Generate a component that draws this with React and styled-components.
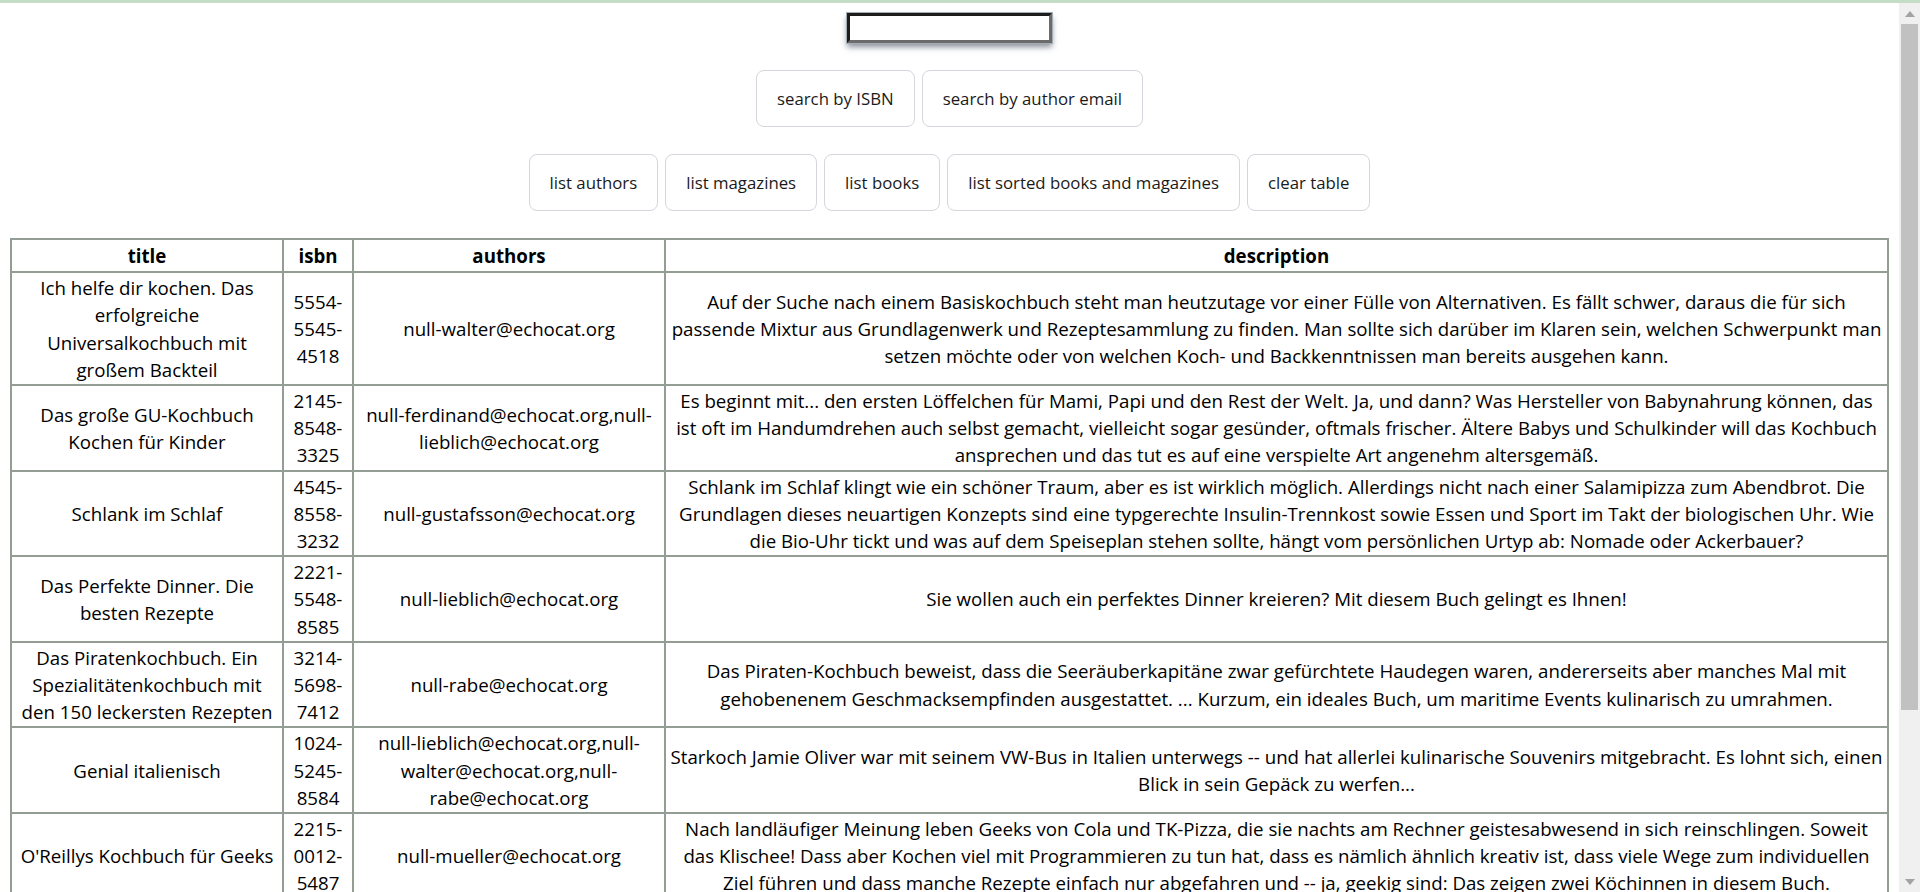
import React from "react";
// Styling
import styled, { createGlobalStyle } from "styled-components";

const books = [
  {
    title: "Ich helfe dir kochen. Das erfolgreiche Universalkochbuch mit großem Backteil",
    isbn: "5554-5545-4518",
    authors: "null-walter@echocat.org",
    description:
      "Auf der Suche nach einem Basiskochbuch steht man heutzutage vor einer Fülle von Alternativen. Es fällt schwer, daraus die für sich passende Mixtur aus Grundlagenwerk und Rezeptesammlung zu finden. Man sollte sich darüber im Klaren sein, welchen Schwerpunkt man setzen möchte oder von welchen Koch- und Backkenntnissen man bereits ausgehen kann.",
  },
  {
    title: "Das große GU-Kochbuch Kochen für Kinder",
    isbn: "2145-8548-3325",
    authors: "null-ferdinand@echocat.org,null-lieblich@echocat.org",
    description:
      "Es beginnt mit... den ersten Löffelchen für Mami, Papi und den Rest der Welt. Ja, und dann? Was Hersteller von Babynahrung können, das ist oft im Handumdrehen auch selbst gemacht, vielleicht sogar gesünder, oftmals frischer. Ältere Babys und Schulkinder will das Kochbuch ansprechen und das tut es auf eine verspielte Art angenehm altersgemäß.",
  },
  {
    title: "Schlank im Schlaf",
    isbn: "4545-8558-3232",
    authors: "null-gustafsson@echocat.org",
    description:
      "Schlank im Schlaf klingt wie ein schöner Traum, aber es ist wirklich möglich. Allerdings nicht nach einer Salamipizza zum Abendbrot. Die Grundlagen dieses neuartigen Konzepts sind eine typgerechte Insulin-Trennkost sowie Essen und Sport im Takt der biologischen Uhr. Wie die Bio-Uhr tickt und was auf dem Speiseplan stehen sollte, hängt vom persönlichen Urtyp ab: Nomade oder Ackerbauer?",
  },
  {
    title: "Das Perfekte Dinner. Die besten Rezepte",
    isbn: "2221-5548-8585",
    authors: "null-lieblich@echocat.org",
    description: "Sie wollen auch ein perfektes Dinner kreieren? Mit diesem Buch gelingt es Ihnen!",
  },
  {
    title: "Das Piratenkochbuch. Ein Spezialitätenkochbuch mit den 150 leckersten Rezepten",
    isbn: "3214-5698-7412",
    authors: "null-rabe@echocat.org",
    description:
      "Das Piraten-Kochbuch beweist, dass die Seeräuberkapitäne zwar gefürchtete Haudegen waren, andererseits aber manches Mal mit gehobenenem Geschmacksempfinden ausgestattet. ... Kurzum, ein ideales Buch, um maritime Events kulinarisch zu umrahmen.",
  },
  {
    title: "Genial italienisch",
    isbn: "1024-5245-8584",
    authors: "null-lieblich@echocat.org,null-walter@echocat.org,null-rabe@echocat.org",
    description:
      "Starkoch Jamie Oliver war mit seinem VW-Bus in Italien unterwegs -- und hat allerlei kulinarische Souvenirs mitgebracht. Es lohnt sich, einen Blick in sein Gepäck zu werfen...",
  },
  {
    title: "O'Reillys Kochbuch für Geeks",
    isbn: "2215-0012-5487",
    authors: "null-mueller@echocat.org",
    description:
      "Nach landläufiger Meinung leben Geeks von Cola und TK-Pizza, die sie nachts am Rechner geistesabwesend in sich reinschlingen. Soweit das Klischee! Dass aber Kochen viel mit Programmieren zu tun hat, dass es nämlich ähnlich kreativ ist, dass viele Wege zum individuellen Ziel führen und dass manche Rezepte einfach nur abgefahren und -- ja, geekig sind: Das zeigen zwei Köchinnen in diesem Buch.",
  },
  {
    title: "Schuhbecks Kochschule. Kochen lernen mit Alfons Schuhbeck",
    isbn: "1215-4545-5895",
    authors: "null-walter@echocat.org",
    description:
      "Aller Anfang ist leicht! Zumindest, wenn man beim Kochenlernen einen Lehrer wie Alfons Schuhbeck zur Seite hat. Mit seiner Hilfe werden auch Neulinge in der Küche schnell zu Könnern, die ihre Freunde und Familie überraschen können.",
  },
];

// Small triangle for the scrollbar buttons
function Arrow({ down }) {
  return (
    <svg width="10" height="6" viewBox="0 0 10 6">
      <path d={down ? "M0 0 L5 6 L10 0 Z" : "M0 6 L5 0 L10 6 Z"} fill="#a3a3a3" />
    </svg>
  );
}

function App() {
  return (
    <>
      <GlobalStyle />
      <Frame>
        <TopLine />
        <Viewport>
          <Scroller>
            <Page>
              <SearchInput type="text" />
              <ButtonRow>
                <Button>search by ISBN</Button>
                <Button>search by author email</Button>
              </ButtonRow>
              <ButtonRow>
                <Button>list authors</Button>
                <Button>list magazines</Button>
                <Button>list books</Button>
                <Button>list sorted books and magazines</Button>
                <Button>clear table</Button>
              </ButtonRow>
              <Table>
                <colgroup>
                  <Col $width={272} />
                  <Col $width={70} />
                  <Col $width={312} />
                  <Col />
                </colgroup>
                <thead>
                  <tr>
                    <Head>title</Head>
                    <Head>isbn</Head>
                    <Head>authors</Head>
                    <Head>description</Head>
                  </tr>
                </thead>
                <tbody>
                  {books.map((book) => (
                    <tr key={book.isbn}>
                      <Cell>{book.title}</Cell>
                      <Cell>{book.isbn}</Cell>
                      <Cell>{book.authors}</Cell>
                      <Cell>{book.description}</Cell>
                    </tr>
                  ))}
                </tbody>
              </Table>
            </Page>
          </Scroller>
          {/* window scrollbar */}
          <ScrollBar>
            <ScrollButton>
              <Arrow />
            </ScrollButton>
            <ScrollTrack>
              <Thumb />
            </ScrollTrack>
            <ScrollButton>
              <Arrow down />
            </ScrollButton>
          </ScrollBar>
        </Viewport>
      </Frame>
    </>
  );
}

const GlobalStyle = createGlobalStyle`
  html, body {
    margin: 0;
    height: 100%;
    overflow: hidden;
    background: #fff;
  }
  body {
    font-family: "Open Sans", "Noto Sans", sans-serif;
    color: #000;
  }
`;

const Frame = styled.div`
  height: 100vh;
  display: flex;
  flex-direction: column;
`;

const TopLine = styled.div`
  height: 3px;
  flex: none;
  background: #c4ddc4;
`;

const Viewport = styled.div`
  flex: 1;
  min-height: 0;
  display: flex;
`;

const Scroller = styled.div`
  flex: 1;
  min-width: 0;
  overflow-y: auto;
  scrollbar-width: none;
`;

const ScrollBar = styled.div`
  width: 21px;
  flex: none;
  display: flex;
  flex-direction: column;
  background: #f0f0f0;
`;

const ScrollButton = styled.div`
  height: 21px;
  flex: none;
  display: flex;
  align-items: center;
  justify-content: center;
`;

const ScrollTrack = styled.div`
  flex: 1;
  padding: 0 2px;
`;

const Thumb = styled.div`
  height: 686px;
  background: #c1c1c1;
`;

const Page = styled.div`
  padding: 10px;
  display: flex;
  flex-direction: column;
  align-items: center;
  gap: 27px;
`;

const SearchInput = styled.input`
  width: 205px;
  height: 30px;
  box-sizing: border-box;
  border: 3px solid;
  border-color: #1c1c1c #6b6b6b #6b6b6b #1c1c1c;
  box-shadow: 0 0 0 1px #a3adb6, 0 4px 6px rgba(40, 50, 70, 0.55);
  outline: none;
  background: #fff;
`;

const ButtonRow = styled.div`
  display: flex;
  justify-content: center;
  gap: 7px;
`;

const Button = styled.button`
  height: 57px;
  box-sizing: border-box;
  padding: 0 20px;
  background: #fff;
  border: 1px solid #d5d5dd;
  border-radius: 8px;
  font-family: "Open Sans", "Noto Sans", sans-serif;
  font-size: 16.8px;
  color: #1a1a1a;
  cursor: pointer;
`;

const Table = styled.table`
  width: 100%;
  table-layout: fixed;
  border-collapse: collapse;
  border: 2px solid;
  border-color: #8f9a8f #d3ddd3 #d3ddd3 #8f9a8f;
  font-size: 18.7px;
  line-height: 27.2px;
`;

const Col = styled.col`
  width: ${(p) => (p.$width ? `${p.$width}px` : "auto")};
`;

const Head = styled.th`
  border: 2px solid #939d93;
  padding: 2px;
  font-weight: 700;
  text-align: center;
`;

const Cell = styled.td`
  border: 2px solid #939d93;
  padding: 1px 2px;
  text-align: center;
  vertical-align: middle;
`;

export default App;
